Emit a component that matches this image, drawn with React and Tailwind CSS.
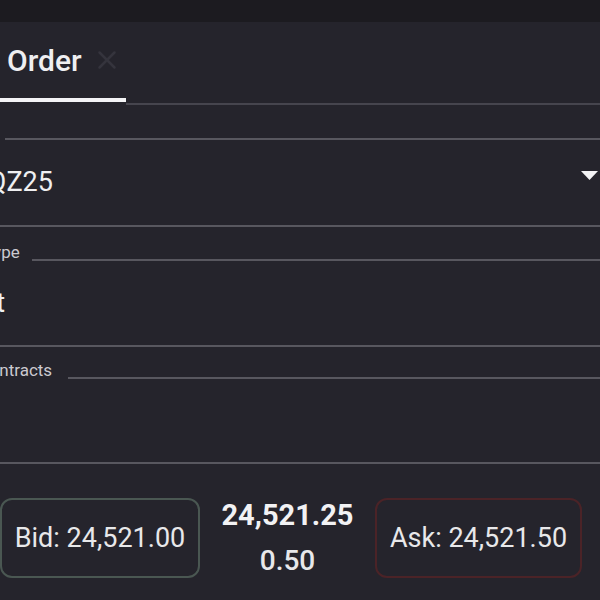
import React from "react";
import { X } from "lucide-react";

const font = { fontFamily: "Roboto, 'Noto Sans', sans-serif" };

const Field = ({ label, value, top, inner, lead, labelGap, dropdown = false }) => (
  <div className="flex flex-col">
    <div className={`flex items-end ${top}`}>
      <div className={`${lead} h-[2px] bg-[#58575f]`} />
      <span className={`pl-1 ${labelGap} text-[17px] leading-none text-[#cbcad0]`}>{label}</span>
      <div className="flex-1 h-[2px] bg-[#58575f]" />
    </div>
    <div className={`flex items-center justify-between pl-[14px] pr-[23px] ${inner}`}>
      <span className="text-[27px] text-[#efeff1]">{value}</span>
      {dropdown && (
        <svg width="17" height="9" viewBox="0 0 17 9" className="mb-[14px]">
          <polygon points="0,0 17,0 8.5,9" fill="#f2f2f4" />
        </svg>
      )}
    </div>
    <div className="h-[2px] bg-[#58575f]" />
  </div>
);

export default function App() {
  return (
    <div className="w-[600px] h-[600px] overflow-hidden bg-[#25242c] flex flex-col" style={font}>
      <div className="h-[22px] bg-[#1c1b20]" />

      {/* tabs */}
      <div className="flex items-end">
        <div className="flex items-center h-[80px] pl-[7px] pr-[4px] border-b-4 border-[#f4f4f6]">
          <span className="text-[30px] font-medium text-[#efeff1]">Order</span>
          <X size={30} strokeWidth={2} className="ml-[10px] text-[#35343d]" />
        </div>
        <div className="flex-1 h-[2px] mb-[-3px] bg-[#46454e]" />
      </div>

      {/* form */}
      <div className="-ml-[69px] w-[690px] flex flex-col">
        <Field label="Symbol" value="MNQZ25" top="h-[38px]" inner="h-[85px]" lead="w-[6px]" labelGap="pr-[8px]" dropdown />
        <Field label="Order Type" value="Limit" top="h-[34px]" inner="h-[84px]" lead="w-[3px]" labelGap="pr-[12px]" />
        <Field label="# of Contracts" value="" top="h-[32px]" inner="h-[83px]" lead="w-[9px]" labelGap="pr-[16px]" />
      </div>

      {/* quote row */}
      <div className="flex items-center mt-[34px] pr-[18px]">
        <div className="w-[200px] h-[80px] flex items-center justify-center rounded-[12px] border-2 border-[#4a5752]">
          <span className="text-[27px] text-[#e8e8ea]">Bid: 24,521.00</span>
        </div>
        <div className="flex-1 h-[80px] flex flex-col items-center justify-center">
          <span className="text-[29px] leading-[46px] font-bold text-[#f2f2f4]">24,521.25</span>
          <span className="text-[28px] leading-[46px] font-medium text-[#e8e8ea]">0.50</span>
        </div>
        <div className="w-[207px] h-[80px] flex items-center justify-center rounded-[12px] border-2 border-[#4b2327]">
          <span className="text-[27px] text-[#e8e8ea]">Ask: 24,521.50</span>
        </div>
      </div>
    </div>
  );
}
